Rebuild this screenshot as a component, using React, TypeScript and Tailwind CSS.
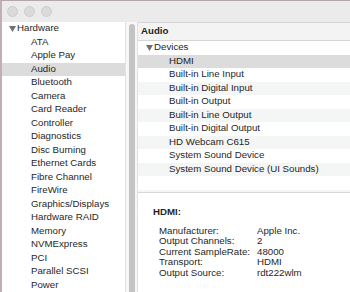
import React from 'react';

const sidebarItems = [
  'ATA',
  'Apple Pay',
  'Audio',
  'Bluetooth',
  'Camera',
  'Card Reader',
  'Controller',
  'Diagnostics',
  'Disc Burning',
  'Ethernet Cards',
  'Fibre Channel',
  'FireWire',
  'Graphics/Displays',
  'Hardware RAID',
  'Memory',
  'NVMExpress',
  'PCI',
  'Parallel SCSI',
  'Power',
];

const devices = [
  'HDMI',
  'Built-in Line Input',
  'Built-in Digital Input',
  'Built-in Output',
  'Built-in Line Output',
  'Built-in Digital Output',
  'HD Webcam C615',
  'System Sound Device',
  'System Sound Device (UI Sounds)',
];

const details = [
  ['Manufacturer:', 'Apple Inc.'],
  ['Output Channels:', '2'],
  ['Current SampleRate:', '48000'],
  ['Transport:', 'HDMI'],
  ['Output Source:', 'rdt222wlm'],
];

const Triangle: React.FC = () => (
  <svg width="7" height="6" viewBox="0 0 7 6" className="shrink-0">
    <path d="M0 0 H7 L3.5 6 Z" fill="#707070" />
  </svg>
);

const App: React.FC = () => {
  return (
    <div
      className="w-[350px] h-[292px] overflow-hidden flex flex-col bg-white text-[#1f1f1f] text-[9.7px] border-t border-t-[#b6a6ac] border-l-2 border-l-[#c2aeb5]"
      style={{ fontFamily: '"Liberation Sans", Arial, sans-serif' }}
    >
      {/* title bar */}
      <div className="h-[21px] shrink-0 bg-[#ebebeb] flex items-center gap-[6px] pl-[5px] pb-[1px]">
        <span className="w-[11px] h-[11px] rounded-full bg-[#dadada] border border-[#cdcdcd]" />
        <span className="w-[11px] h-[11px] rounded-full bg-[#dadada] border border-[#cdcdcd]" />
        <span className="w-[11px] h-[11px] rounded-full bg-[#dadada] border border-[#cdcdcd]" />
      </div>

      <div className="flex flex-1 min-h-0">
        {/* sidebar */}
        <div className="w-[123px] shrink-0 flex flex-col">
          <div className="h-[13.5px] shrink-0 flex items-center gap-[1px] pl-[7px]">
            <Triangle />
            <span>Hardware</span>
          </div>
          {sidebarItems.map((item) => (
            <div
              key={item}
              className={`h-[13.5px] shrink-0 flex items-center pl-[29px] ${item === 'Audio' ? 'bg-[#dcdcdc]' : ''}`}
            >
              {item}
            </div>
          ))}
        </div>

        {/* splitter / scrollbar */}
        <div className="w-[13px] shrink-0 flex border-l border-[#e2e2e2] border-r bg-[#f7f7f7] pt-[2px] justify-center">
          <div className="w-[6px] h-full rounded-t-full bg-[#c4c4c4]" />
        </div>

        {/* content */}
        <div className="flex-1 flex flex-col min-w-0">
          <div className="h-[19px] shrink-0 bg-[#f3f3f3] border-t border-b border-[#d6d6d6] flex items-center pl-[3px] font-bold">
            Audio
          </div>
          <div className="h-[152px] shrink-0 flex flex-col border-b border-[#d8d8d8]">
            <div className="h-[13.5px] shrink-0 flex items-center gap-[1px] pl-[8px]">
              <Triangle />
              <span>Devices</span>
            </div>
            {devices.map((d, i) => (
              <div
                key={d}
                className={`h-[13.5px] shrink-0 flex items-center pl-[31px] ${
                  i === 0 ? 'bg-[#dcdcdc]' : i % 2 === 0 ? 'bg-[#f4f5f5]' : ''
                }`}
              >
                {d}
              </div>
            ))}
            <div className="h-[13.5px] shrink-0" />
            <div className="flex-1 bg-[#f4f5f5]" />
          </div>

          <div className="flex-1 pt-[13px] pl-[15px]">
            <div className="font-bold leading-[11px]">HDMI:</div>
            <div className="mt-[9px] pl-[6px] flex flex-col">
              {details.map(([k, v]) => (
                <div key={k} className="flex h-[10.5px] items-center">
                  <span className="w-[98px] shrink-0">{k}</span>
                  <span>{v}</span>
                </div>
              ))}
            </div>
          </div>
        </div>
      </div>
    </div>
  );
};

export default App;
